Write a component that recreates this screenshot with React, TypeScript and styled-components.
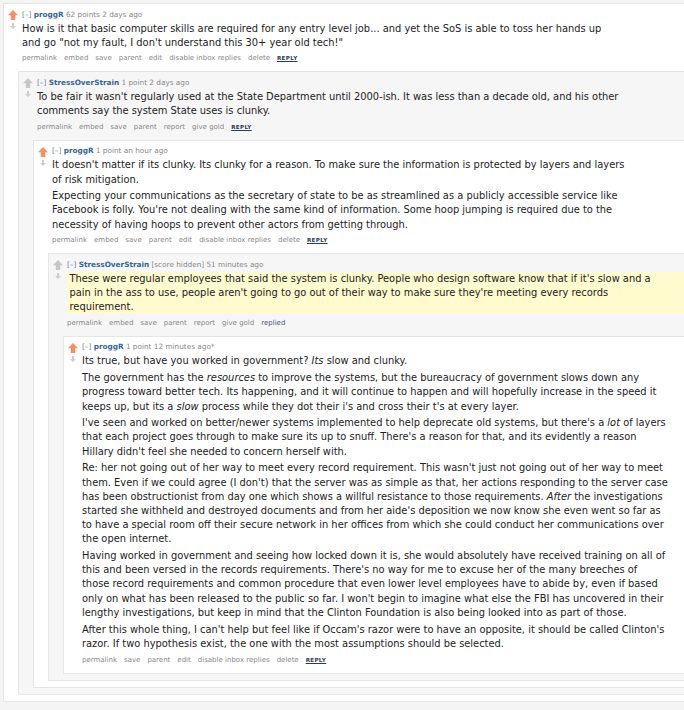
import React from 'react'
import styled, { createGlobalStyle } from 'styled-components'

type CommentData = {
  author: string
  score: string
  time: string
  upvoted: boolean
  body: string[][]
  highlight?: boolean
  buttons: string[]
  action: 'reply' | 'replied'
  child?: CommentData
}

const GlobalStyle = createGlobalStyle`
  html, body {
    margin: 0;
    background: #f4f4f4;
    overflow: hidden;
  }
  body {
    font-family: "DejaVu Sans", Verdana, sans-serif;
    color: #222;
  }
`

const Page = styled.div`
  padding: 3px 0 0 3px;
`

const Box = styled.div<{ $odd: boolean }>`
  background: ${(p) => (p.$odd ? '#f6f6f6' : '#ffffff')};
  border: 1px solid #e6e6e6;
  border-right: none;
  padding: 4.5px 0 6px;
  margin-right: -40px;
`

const Row = styled.div`
  display: flex;
`

const Votes = styled.div`
  width: 18px;
  flex: none;
  display: flex;
  flex-direction: column;
  align-items: center;
  padding-top: 1.5px;
  gap: 3px;
`

const Entry = styled.div`
  flex: 1;
  min-width: 0;
`

const Tagline = styled.div`
  font-size: 7.3px;
  line-height: 12px;
  color: #888;
  margin-bottom: 1px;
  white-space: pre;
`

const Expand = styled.span`
  color: #6a7fa0;
`

const Author = styled.span`
  color: #336699;
  font-weight: bold;
`

const Body = styled.div<{ $highlight?: boolean }>`
  background: ${(p) => (p.$highlight ? '#fffbcf' : 'transparent')};
  padding-left: ${(p) => (p.$highlight ? '3px' : '0')};
  margin-left: ${(p) => (p.$highlight ? '-0.5px' : '0')};
`

const Para = styled.p`
  margin: 0 0 2.5px;
  font-size: 9.9px;
  line-height: 14.2px;
  white-space: nowrap;
`

const Buttons = styled.ul`
  list-style: none;
  margin: 1px 0 1px;
  padding: 0;
  display: flex;
  align-items: center;
  gap: 7px;
  height: 12px;
  font-size: 7px;
  color: #888;
  white-space: nowrap;
`

const Action = styled.li<{ $kind: 'reply' | 'replied' }>`
  color: ${(p) => (p.$kind === 'reply' ? '#2d3b4f' : '#4e5670')};
  font-weight: ${(p) => (p.$kind === 'reply' ? 'bold' : 'normal')};
  font-size: ${(p) => (p.$kind === 'reply' ? '5.6px' : '7px')};
  text-decoration: ${(p) => (p.$kind === 'reply' ? 'underline' : 'none')};
  letter-spacing: ${(p) => (p.$kind === 'reply' ? '0.3px' : '0')};
`

const Children = styled.div`
  margin: 6px 0 0 14px;
`

const UpArrow = ({ on }: { on: boolean }) => (
  <svg width="10" height="10" viewBox="0 0 10 10">
    <path d="M5 0 L10 5.3 H7.2 V10 H2.8 V5.3 H0 Z" fill={on ? '#ff8b60' : '#c6c6c6'} />
  </svg>
)

const DownArrow = () => (
  <svg width="6" height="6" viewBox="0 0 6 6">
    <path d="M2 0 H4 V3 H6 L3 6 L0 3 H2 Z" fill="#cdcdcd" />
  </svg>
)

const renderLine = (line: string) =>
  line.split(/(\*[^*]+\*)/).map((part, i) =>
    part.startsWith('*') && part.endsWith('*') && part.length > 2 ? (
      <em key={i}>{part.slice(1, -1)}</em>
    ) : (
      <React.Fragment key={i}>{part}</React.Fragment>
    )
  )

const Comment = ({ data, depth }: { data: CommentData; depth: number }) => (
  <Box $odd={depth % 2 === 1}>
    <Row>
      <Votes>
        <UpArrow on={data.upvoted} />
        <DownArrow />
      </Votes>
      <Entry>
        <Tagline>
          <Expand>[–]</Expand> <Author>{data.author}</Author> {data.score} {data.time}
        </Tagline>
        <Body $highlight={data.highlight}>
          {data.body.map((para, i) => (
            <Para key={i}>
              {para.map((line, j) => (
                <React.Fragment key={j}>
                  {j > 0 && <br />}
                  {renderLine(line)}
                </React.Fragment>
              ))}
            </Para>
          ))}
        </Body>
        <Buttons>
          {data.buttons.map((b) => (
            <li key={b}>{b}</li>
          ))}
          <Action $kind={data.action}>{data.action === 'reply' ? 'REPLY' : 'replied'}</Action>
        </Buttons>
      </Entry>
    </Row>
    {data.child && (
      <Children>
        <Comment data={data.child} depth={depth + 1} />
      </Children>
    )}
  </Box>
)

const ownButtons = ['permalink', 'embed', 'save', 'parent', 'edit', 'disable inbox replies', 'delete']
const otherButtons = ['permalink', 'embed', 'save', 'parent', 'report', 'give gold']

const thread: CommentData = {
  author: 'proggR',
  score: '62 points',
  time: '2 days ago',
  upvoted: true,
  buttons: ownButtons,
  action: 'reply',
  body: [
    [
      'How is it that basic computer skills are required for any entry level job... and yet the SoS is able to toss her hands up',
      'and go "not my fault, I don\'t understand this 30+ year old tech!"',
    ],
  ],
  child: {
    author: 'StressOverStrain',
    score: '1 point',
    time: '2 days ago',
    upvoted: false,
    buttons: otherButtons,
    action: 'reply',
    body: [
      [
        "To be fair it wasn't regularly used at the State Department until 2000-ish. It was less than a decade old, and his other",
        'comments say the system State uses is clunky.',
      ],
    ],
    child: {
      author: 'proggR',
      score: '1 point',
      time: 'an hour ago',
      upvoted: true,
      buttons: ownButtons,
      action: 'reply',
      body: [
        [
          "It doesn't matter if its clunky. Its clunky for a reason. To make sure the information is protected by layers and layers",
          'of risk mitigation.',
        ],
        [
          'Expecting your communications as the secretary of state to be as streamlined as a publicly accessible service like',
          "Facebook is folly. You're not dealing with the same kind of information. Some hoop jumping is required due to the",
          'necessity of having hoops to prevent other actors from getting through.',
        ],
      ],
      child: {
        author: 'StressOverStrain',
        score: '[score hidden]',
        time: '51 minutes ago',
        upvoted: false,
        highlight: true,
        buttons: otherButtons,
        action: 'replied',
        body: [
          [
            "These were regular employees that said the system is clunky. People who design software know that if it's slow and a",
            "pain in the ass to use, people aren't going to go out of their way to make sure they're meeting every records",
            'requirement.',
          ],
        ],
        child: {
          author: 'proggR',
          score: '1 point',
          time: '12 minutes ago*',
          upvoted: true,
          buttons: ['permalink', 'save', 'parent', 'edit', 'disable inbox replies', 'delete'],
          action: 'reply',
          body: [
            ['Its true, but have you worked in government? *Its* slow and clunky.'],
            [
              'The government has the *resources* to improve the systems, but the bureaucracy of government slows down any',
              'progress toward better tech. Its happening, and it will continue to happen and will hopefully increase in the speed it',
              "keeps up, but its a *slow* process while they dot their i's and cross their t's at every layer.",
            ],
            [
              "I've seen and worked on better/newer systems implemented to help deprecate old systems, but there's a *lot* of layers",
              "that each project goes through to make sure its up to snuff. There's a reason for that, and its evidently a reason",
              "Hillary didn't feel she needed to concern herself with.",
            ],
            [
              "Re: her not going out of her way to meet every record requirement. This wasn't just not going out of her way to meet",
              "them. Even if we could agree (I don't) that the server was as simple as that, her actions responding to the server case",
              'has been obstructionist from day one which shows a willful resistance to those requirements. *After* the investigations',
              "started she withheld and destroyed documents and from her aide's deposition we now know she even went so far as",
              'to have a special room off their secure network in her offices from which she could conduct her communications over',
              'the open internet.',
            ],
            [
              'Having worked in government and seeing how locked down it is, she would absolutely have received training on all of',
              "this and been versed in the records requirements. There's no way for me to excuse her of the many breeches of",
              'those record requirements and common procedure that even lower level employees have to abide by, even if based',
              "only on what has been released to the public so far. I won't begin to imagine what else the FBI has uncovered in their",
              'lengthy investigations, but keep in mind that the Clinton Foundation is also being looked into as part of those.',
            ],
            [
              "After this whole thing, I can't help but feel like if Occam's razor were to have an opposite, it should be called Clinton's",
              'razor. If two hypothesis exist, the one with the most assumptions should be selected.',
            ],
          ],
        },
      },
    },
  },
}

export default function App() {
  return (
    <Page>
      <GlobalStyle />
      <Comment data={thread} depth={0} />
    </Page>
  )
}
